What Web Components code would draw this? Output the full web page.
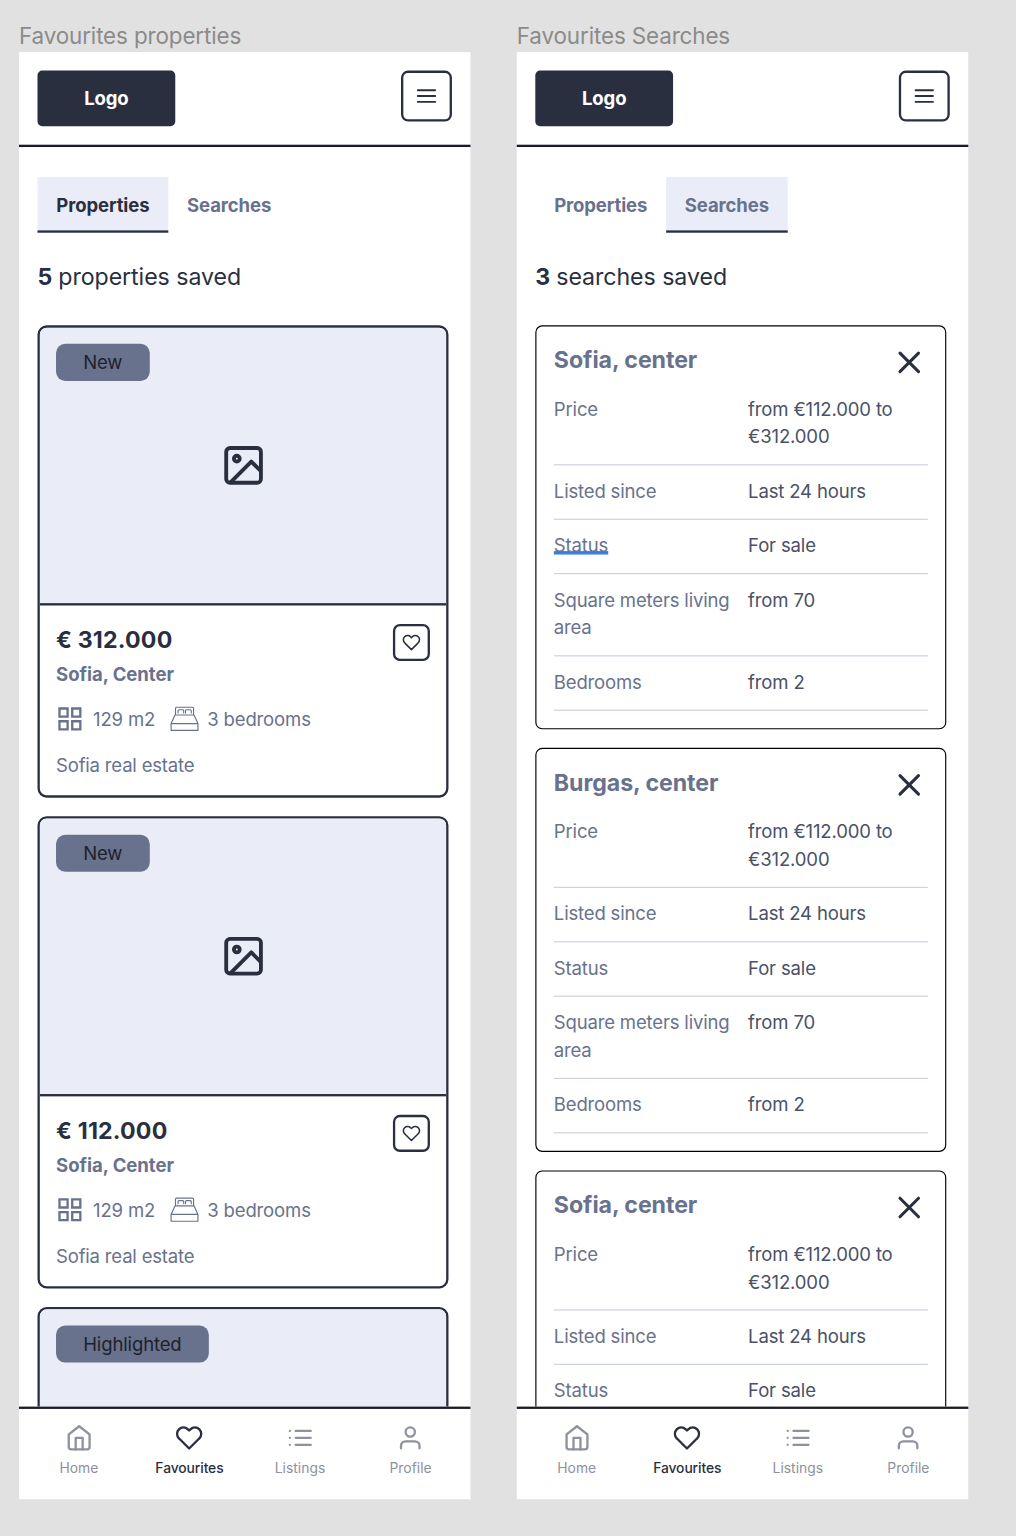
<!DOCTYPE html>
<html lang="en">
<head>
<meta charset="utf-8">
<title>Favourites</title>
<style>
html,body{margin:0;height:1536px;overflow:hidden;background:#e1e1e1}
body{font-family:Inter,"Liberation Sans",sans-serif;--ink:#2a2f3f;--slate:#69728d;--tint:#eaedf7;--line:#1c1c29;--muted:#8e919e}
</style>
</head>
<body>
<art-board>
  <phone-frame label="Favourites properties">
    <app-header slot="header"></app-header>
    <tab-bar active="0"></tab-bar>
    <result-count n="5">properties saved</result-count>
    <card-list>
      <property-card badge="New" price="€ 312.000"></property-card>
      <property-card badge="New" price="€ 112.000"></property-card>
      <property-card badge="Highlighted" price="€ 112.000" preview></property-card>
    </card-list>
    <bottom-nav slot="nav"></bottom-nav>
  </phone-frame>
  <phone-frame label="Favourites Searches">
    <app-header slot="header"></app-header>
    <tab-bar active="1"></tab-bar>
    <result-count n="3">searches saved</result-count>
    <card-list>
      <search-card name="Sofia, center" marked></search-card>
      <search-card name="Burgas, center"></search-card>
      <search-card name="Sofia, center" rows="3"></search-card>
    </card-list>
    <bottom-nav slot="nav"></bottom-nav>
  </phone-frame>
</art-board>
<script>
const ICONS={
  menu:'<path d="M3 12h18M3 6h18M3 18h18"/>',
  heart:'<path d="M20.84 4.61a5.5 5.5 0 0 0-7.78 0L12 5.67l-1.06-1.06a5.5 5.5 0 0 0-7.78 7.78l1.06 1.06L12 21.23l7.78-7.78 1.06-1.06a5.5 5.5 0 0 0 0-7.78z"/>',
  home:'<path d="M3 9l9-7 9 7v11a2 2 0 0 1-2 2H5a2 2 0 0 1-2-2z"/><path d="M9 22V12h6v10"/>',
  list:'<path d="M8 6h13M8 12h13M8 18h13M3 6h.01M3 12h.01M3 18h.01"/>',
  user:'<path d="M20 21v-2a4 4 0 0 0-4-4H8a4 4 0 0 0-4 4v2"/><circle cx="12" cy="7" r="4"/>',
  image:'<rect x="3" y="3" width="18" height="18" rx="2"/><circle cx="8.5" cy="8.5" r="1.5"/><path stroke-linecap="butt" d="M21 15l-5-5L5 21"/>',
  grid:'<path stroke-linejoin="miter" d="M3 3h7v7H3zM14 3h7v7h-7zM14 14h7v7h-7zM3 14h7v7H3z"/>',
  close:'<path d="M18 6L6 18M6 6l12 12"/>',
  bed:'<g stroke-width="1"><path d="M4.2 8.6V2.9a1 1 0 0 1 1-1h13.6a1 1 0 0 1 1 1v5.7M3.8 8.6h16.4l3.4 7.4v5.9H.4V16zM.4 16h23.2"/><path d="M6.4 6.8V4.9a.8.8 0 0 1 .8-.8h3.3a.8.8 0 0 1 .8.8v1.9M12.9 6.8V4.9a.8.8 0 0 1 .8-.8H17a.8.8 0 0 1 .8.8v1.9"/></g>'
};
function define(name,render){
  customElements.define(name,class extends HTMLElement{
    connectedCallback(){
      if(!this.shadowRoot)this.attachShadow({mode:'open'}).innerHTML=render(this);
    }
  });
}
define('ui-icon',e=>`<style>:host{display:block;flex:none}svg{display:block;overflow:visible}</style>
<svg width="${e.getAttribute('size')||24}" height="${e.getAttribute('size')||24}" viewBox="0 0 24 24" fill="none" stroke="currentColor" stroke-width="2" stroke-linecap="round" stroke-linejoin="round">${ICONS[e.getAttribute('name')]}</svg>`);

define('art-board',()=>`<style>:host{display:flex;gap:40px;box-sizing:border-box;width:877px;padding:20px 0 0 16px;transform:translateX(.45px) scale(1.1577);transform-origin:0 0}</style><slot></slot>`);

define('phone-frame',e=>`<style>
:host{display:block;width:390px;flex:none}
.label{height:25px;line-height:23px;font-size:19.4px;letter-spacing:-.12px;color:#8b8b8b;white-space:nowrap}
.screen{display:flex;flex-direction:column;height:1250px;background:#fff}
main{flex:1;min-height:0;overflow:hidden;display:flex;flex-direction:column;padding:26px 19px 0 16px}
</style><div class="label">${e.getAttribute('label')}</div>
<div class="screen"><slot name="header"></slot><main><slot></slot></main><slot name="nav"></slot></div>`);

define('app-header',()=>`<style>
:host{display:flex;justify-content:space-between;align-items:flex-start;box-sizing:border-box;height:82px;padding:16px;border-bottom:2px solid var(--line)}
.logo{width:119px;height:48px;border-radius:4px;background:var(--ink);color:#fff;font-weight:700;font-size:16px;letter-spacing:-.1px;line-height:49px;text-align:center}
.menu{box-sizing:border-box;width:44px;height:44px;border:2px solid var(--ink);border-radius:6px;display:flex;align-items:center;justify-content:center;color:var(--ink)}
</style><div class="logo">Logo</div><div class="menu"><ui-icon name="menu" size="20"></ui-icon></div>`);

define('tab-bar',e=>`<style>
:host{display:flex;height:48px;flex:none;font-size:16px;font-weight:700;letter-spacing:-.1px;color:var(--slate)}
div{box-sizing:border-box;width:113px;text-align:center;line-height:48px;height:48px;border-bottom:2px solid transparent}
div+div{width:105px}
.on{background:var(--tint);border-color:var(--ink)}
.dark{color:var(--ink)}
</style>${['Properties','Searches'].map((t,i)=>`<div class="${e.getAttribute('active')==i?'on'+(i?'':' dark'):''}">${t}</div>`).join('')}`);

define('result-count',e=>`<style>:host{display:block;flex:none;height:30px;line-height:30px;margin:23px 0 27px;font-size:20px;letter-spacing:-.05px;color:var(--ink);white-space:nowrap}b{font-weight:700;letter-spacing:-.4px}</style><b>${e.getAttribute('n')}</b> <slot></slot>`);

define('card-list',()=>`<style>:host{display:flex;flex-direction:column;gap:16px}</style><slot></slot>`);

define('property-card',e=>`<style>
:host{display:block;box-sizing:border-box;height:408px;flex:none;border:2px solid var(--ink);border-radius:8px;overflow:hidden;color:var(--slate);font-size:16px;letter-spacing:-.12px;line-height:24px;white-space:nowrap}
.photo{box-sizing:border-box;height:240px;background:var(--tint);border-bottom:2px solid var(--ink);display:grid;place-items:center;color:var(--ink)}
.photo>*{grid-area:1/1}
.badge{place-self:start;margin:14px;height:32px;line-height:32.6px;padding:0 23.5px;border-radius:8px;background:var(--slate);color:#1e212c}
.body{display:flex;justify-content:space-between;padding:16px 14px}
.price{font-size:20px;font-weight:700;letter-spacing:.16px;line-height:28px;color:var(--ink)}
.place{font-weight:700;margin-top:3px;letter-spacing:-.02px}
.facts{display:flex;align-items:center;margin-top:15px}
.facts span{margin:0 12.8px 0 8px}
.agency{margin-top:16px;letter-spacing:-.16px}
.fav{box-sizing:border-box;width:32px;height:32px;border:2px solid var(--ink);border-radius:6px;display:flex;align-items:center;justify-content:center;color:var(--ink)}
</style>
<div class="photo"><ui-icon name="image" size="40"></ui-icon><div class="badge">${e.getAttribute('badge')}</div></div>
${e.hasAttribute('preview')?'':`<div class="body"><div><div class="price">${e.getAttribute('price')}</div><div class="place">Sofia, Center</div>
<div class="facts"><ui-icon name="grid"></ui-icon><span>129 m2</span><ui-icon name="bed"></ui-icon><span>3 bedrooms</span></div>
<div class="agency">Sofia real estate</div></div><div class="fav"><ui-icon name="heart" size="16"></ui-icon></div></div>`}`);

const CRITERIA=[['Price','from €112.000 to €312.000'],['Listed since','Last 24 hours'],['Status','For sale'],['Square meters living area','from 70'],['Bedrooms','from 2']];
define('search-card',e=>`<style>
:host{display:block;box-sizing:border-box;height:349px;flex:none;border:1px solid #000;border-radius:6px;padding:15px;font-size:16px;letter-spacing:-.15px;line-height:24px;color:var(--slate)}
.top{display:flex;justify-content:space-between;height:34px}
.top b{font-size:20px;line-height:28px;font-weight:700;letter-spacing:-.06px}
.top ui-icon{color:var(--ink)}
.row{display:grid;grid-template-columns:152px 1fr;column-gap:15.8px;padding:10px 0 12px;border-bottom:1px solid #cbd0df}
.row span:last-child{color:#4a5168;letter-spacing:-.13px}
.mark{position:relative;justify-self:start}
.mark::after{content:"";position:absolute;left:0;right:-.5px;top:16.5px;height:3.7px;background:#3a7ee4}
</style><div class="top"><b>${e.getAttribute('name')}</b><ui-icon name="close" size="32"></ui-icon></div>
${CRITERIA.slice(0,+e.getAttribute('rows')||5).map(([k,v])=>`<div class="row"><span class="${k=='Status'&&e.hasAttribute('marked')?'mark':''}">${k}</span><span>${v}</span></div>`).join('')}`);

define('bottom-nav',()=>`<style>
:host{display:flex;flex:none;box-sizing:border-box;height:80px;border-top:2px solid var(--line);padding:13px 4px 0;color:var(--muted);font-size:12px;line-height:16px}
div{flex:1;display:flex;flex-direction:column;align-items:center;gap:6px}
.on{color:var(--ink);font-weight:500;letter-spacing:-.1px}
</style>${[['home','Home'],['heart','Favourites'],['list','Listings'],['user','Profile']].map(([i,t])=>`<div class="${i=='heart'?'on':''}"><ui-icon name="${i}"></ui-icon><span>${t}</span></div>`).join('')}`);
</script>
</body>
</html>
